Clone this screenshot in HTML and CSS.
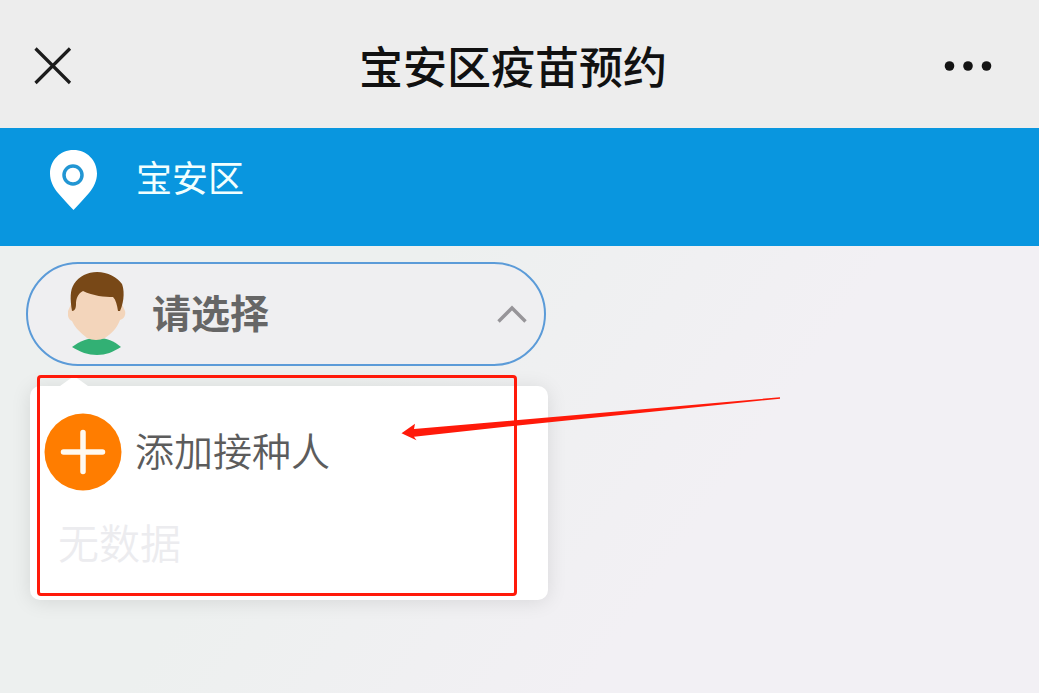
FILE: index.html
```html
<!DOCTYPE html>
<html lang="zh-CN">
<head>
<meta charset="utf-8">
<meta name="viewport" content="width=device-width, initial-scale=1">
<title>宝安区疫苗预约</title>
<link rel="stylesheet" href="styles.css">
</head>
<body>
<header class="topbar">
  <button class="icon-button" type="button" aria-label="关闭">
    <svg width="48" height="38" viewBox="0 0 48 38"><path d="M1.500 1.500L36 36M36 1.500L1.500 36" fill="none" stroke="#1c1c1c" stroke-width="3.200"/></svg>
  </button>
  <h1 class="title">宝安区疫苗预约</h1>
  <button class="icon-button" type="button" aria-label="更多">
    <svg width="48" height="12" viewBox="0 0 48 12" fill="#141414"><circle cx="5.500" cy="6" r="4.800"/><circle cx="24" cy="6" r="4.800"/><circle cx="42.500" cy="6" r="4.800"/></svg>
  </button>
</header>
<div class="location">
  <svg class="pin" width="48" height="60" viewBox="0 0 48 60">
    <path d="M23.500 0C10 0 0 10.500 0 23.500C0 31 3.500 37.500 8 43C13 49 18 54 23.500 60C29 54 34 49 39 43C43.500 37.500 47 31 47 23.500C47 10.500 37 0 23.500 0Z" fill="#fff"/>
    <circle cx="23" cy="25" r="9" fill="none" stroke="#2296d3" stroke-width="3.500"/>
  </svg>
  <span class="district">宝安区</span>
</div>
<main class="content">
  <div class="picker">
    <button class="select" type="button" aria-expanded="true" aria-controls="people">
      <svg class="avatar" width="60" height="84" viewBox="0 0 60 84">
        <path d="M4 75C12 69 20 66 29 66C39 66 46 69 53 75C45 80 38 83 29 83C20 83 12 80 4 75Z" fill="#32b074"/>
        <path d="M4 30L0 39C-1 44 1 48 4 49C7 56 13 61 19 66Q28 70 37 66C44 61 49 56 52 48C56 47 58 43 57 39L53 30L46 12H12Z" fill="#f3d5bb"/>
        <path d="M4 39C2 27 2 18 6 12C11 4 20 0 29 0C40 0 49 5 54 12C56 17 57 28 52 39H50C49 33 48 28 45 25C37 25 25 24 15 19C9 22 8 28 8 32C8 36 7 39 4 39Z" fill="#784817"/>
      </svg>
      <span class="select-label">请选择</span>
      <svg class="chevron" width="30" height="18" viewBox="0 0 30 18"><path d="M1.500 16.500L15 3L28.500 16.500" fill="none" stroke="#979599" stroke-width="3.400"/></svg>
    </button>
    <div class="menu" id="people">
      <button class="add" type="button">
        <svg width="78" height="78" viewBox="0 0 78 78"><circle cx="39" cy="39" r="38.500" fill="#ff7d00"/><path d="M39 19.500V58.500M19.500 39H58.500" stroke="#fff9f0" stroke-width="5.500" stroke-linecap="round"/></svg>
        <span class="add-label">添加接种人</span>
      </button>
      <p class="empty">无数据</p>
      <div class="highlight"></div>
      <svg class="arrow" width="380" height="46" viewBox="0 0 380 46"><path d="M1.500 37.300L15 27.700L14 33L115.500 24.300L380 1.300V2.700L115.500 29.700L14 40.700L16.500 44.300Z" fill="#ff1a0a"/></svg>
    </div>
  </div>
</main>
</body>
</html>
```
FILE: styles.css
```css
* { box-sizing: border-box; }

body {
  margin: 0;
  min-height: 100vh;
  background: linear-gradient(125deg, #edf0ef 40%, #f2f0f4 70%);
  font-family: "Noto Sans CJK SC", sans-serif;
}

button {
  margin: 0;
  padding: 0;
  border: 0;
  background: none;
  font: inherit;
  color: inherit;
  cursor: pointer;
}

svg {
  display: block;
  flex: none;
}

.topbar {
  display: flex;
  align-items: center;
  justify-content: space-between;
  height: 128px;
  padding: 4px 47px 0 34px;
  background: #ededed;
}

.title {
  margin: 0;
  padding-bottom: 2px;
  font-size: 44px;
  font-weight: 500;
  line-height: 64px;
  color: #111;
}

.location {
  display: flex;
  gap: 38px;
  padding: 22px 50px 36px;
  background: #0996df;
  color: #f2fffe;
}

.district {
  font-size: 36px;
  font-weight: 400;
  line-height: 52px;
}

.content { padding: 16px 26px; }

.picker { max-width: 522px; }

.select {
  display: flex;
  align-items: center;
  width: calc(100% - 2px);
  height: 104px;
  padding: 0 17px 0 40px;
  border: 2px solid #5b9bd8;
  border-radius: 52px;
  background: #efeff1;
}

.select-label {
  flex: 1;
  padding: 0 0 6px 24px;
  text-align: left;
  font-size: 39px;
  font-weight: 700;
  line-height: 56px;
  color: #666;
}

.menu {
  position: relative;
  margin: 20px 0 0 4px;
  padding: 27px 14px 27px;
  border-radius: 10px;
  background: #fff;
  box-shadow: 0 2px 20px rgba(0, 0, 0, 0.1);
}

.menu::before {
  content: "";
  position: absolute;
  left: 30px;
  top: -10px;
  border: solid transparent;
  border-width: 0 14px 10px;
  border-bottom-color: #fff;
}

.add {
  display: flex;
  align-items: center;
  gap: 13px;
  width: 100%;
  font-size: 39px;
  font-weight: 350;
  line-height: 56px;
  color: #5c5c5c;
}

.add-label { padding-bottom: 6px; }

.empty {
  margin: 18px 0 0;
  padding-left: 14px;
  font-size: 41px;
  font-weight: 350;
  line-height: 64px;
  color: #ececef;
}

.highlight {
  position: absolute;
  inset: -11px 31px 4px 7px;
  border: 3px solid #ff1a0a;
  border-radius: 4px;
  pointer-events: none;
}

.arrow {
  position: absolute;
  left: 370px;
  top: 10px;
  pointer-events: none;
}
```
